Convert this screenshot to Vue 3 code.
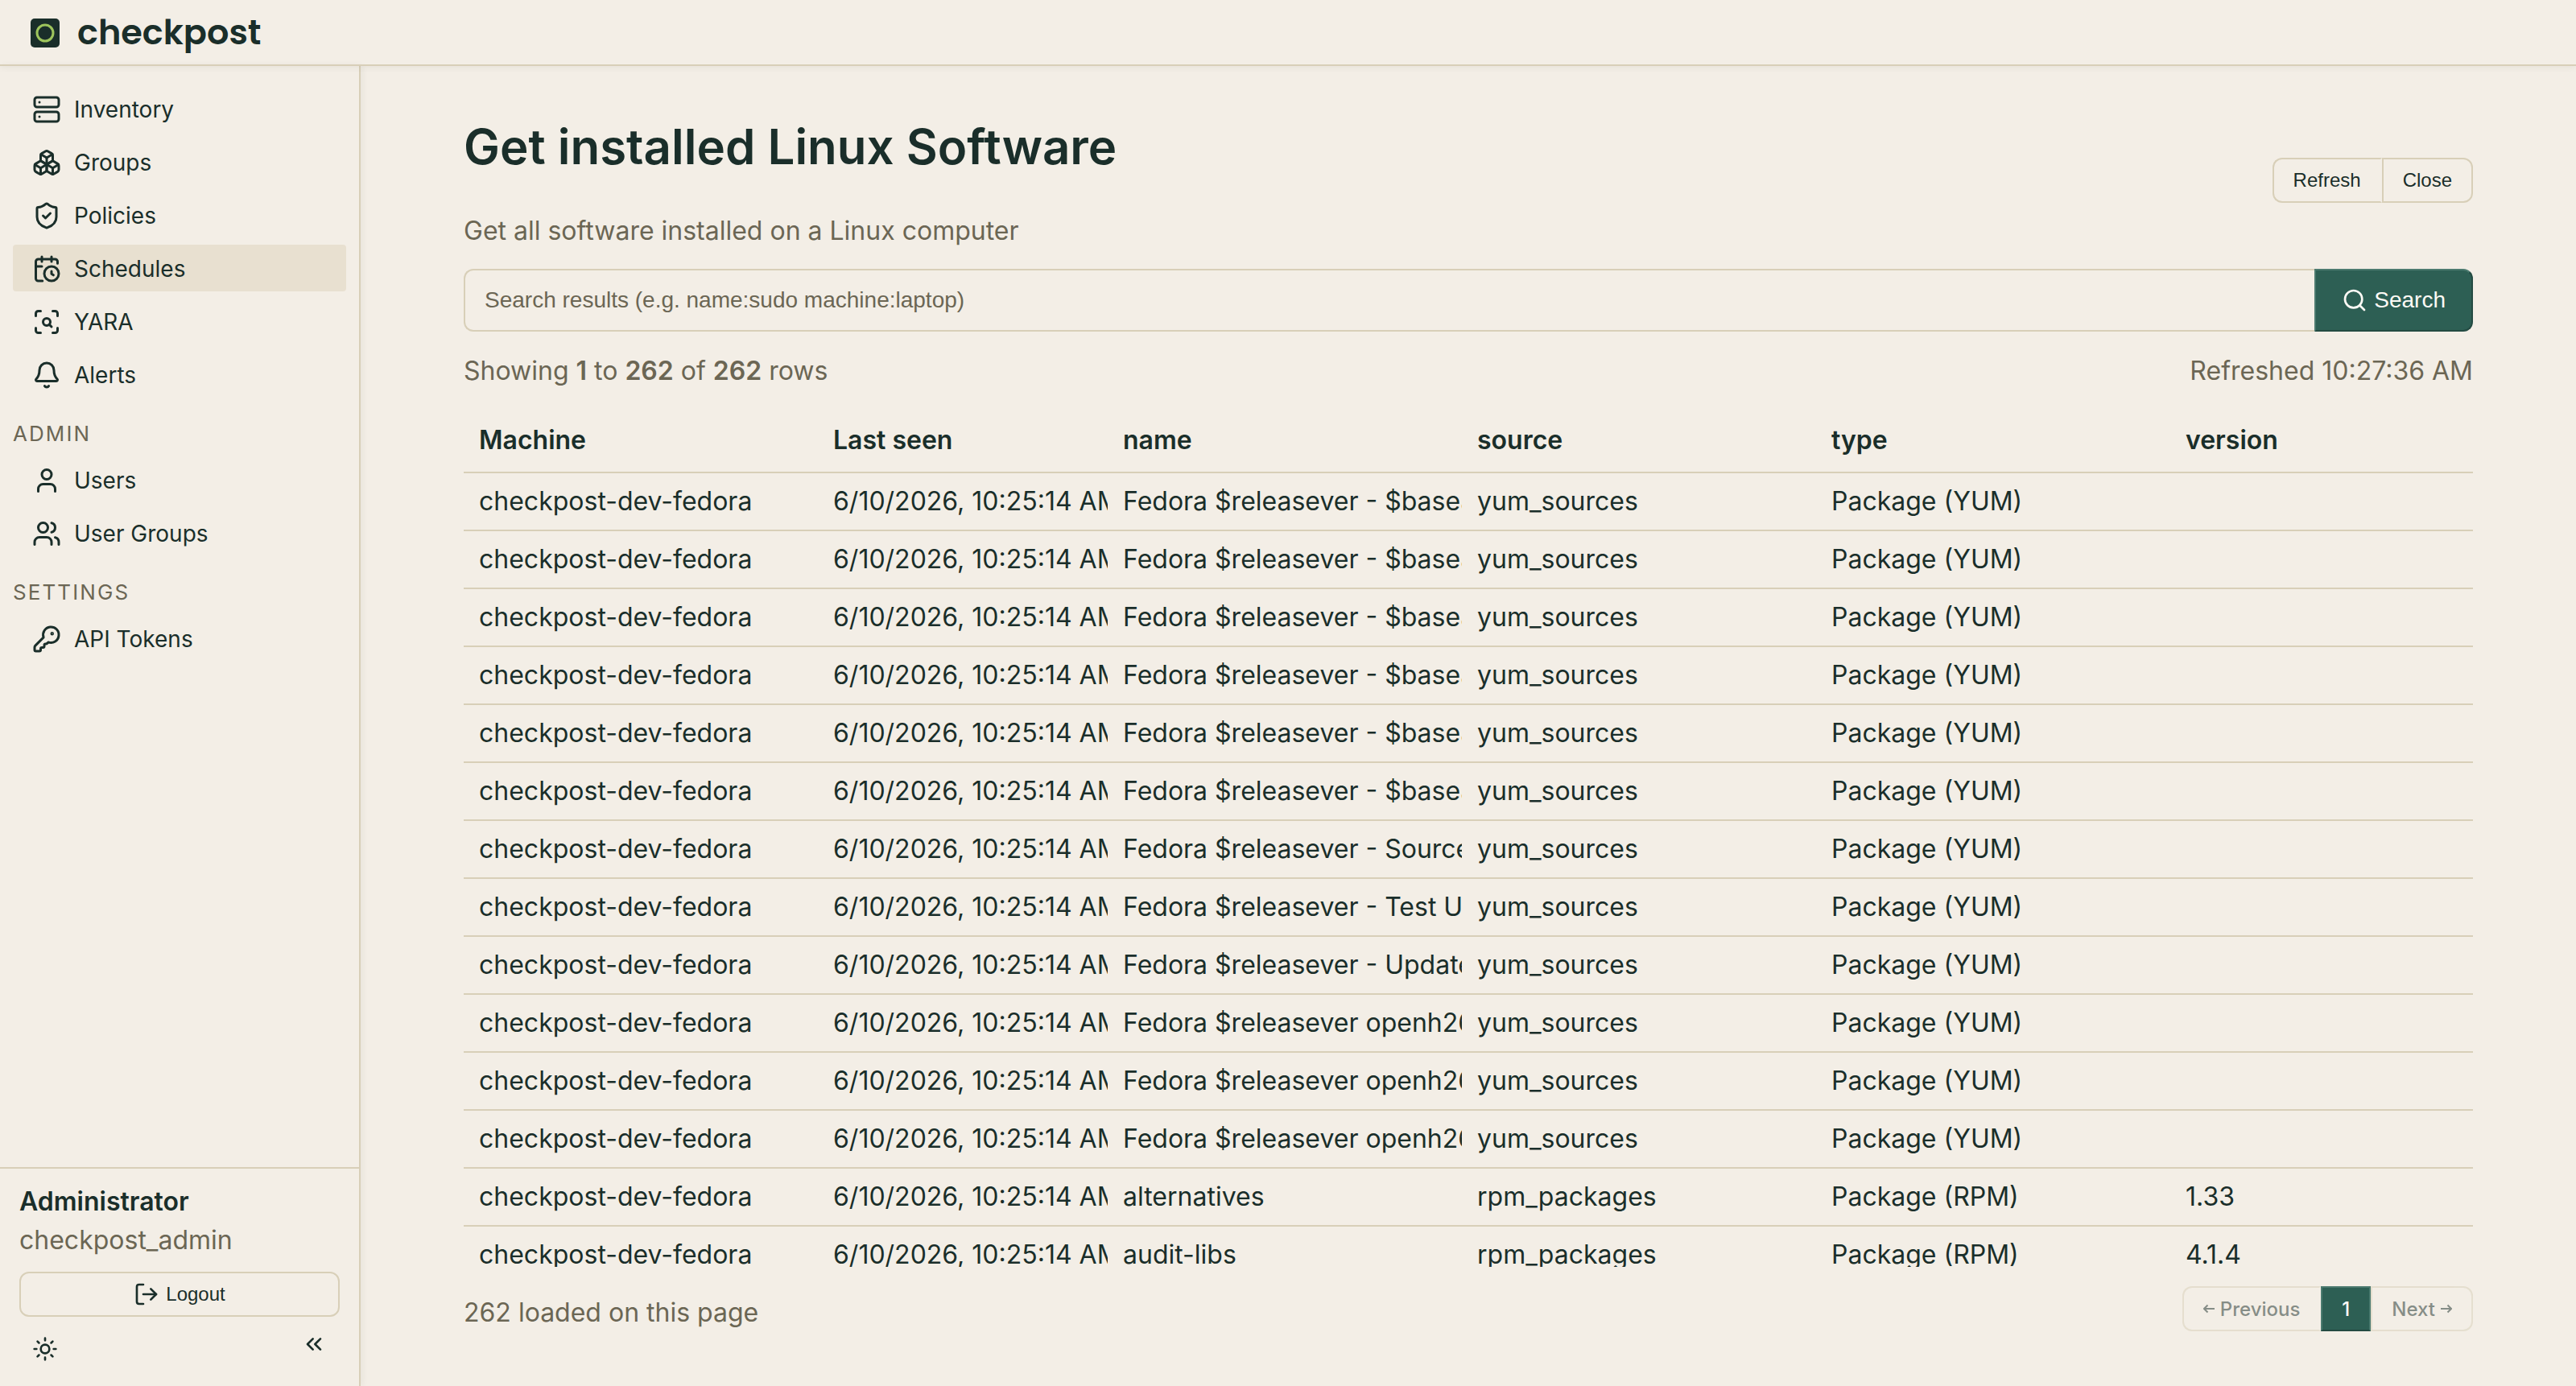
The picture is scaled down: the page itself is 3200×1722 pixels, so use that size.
<script setup>
import { ref } from 'vue'

const mainNav = [
  { label: 'Inventory', icon: 'server' },
  { label: 'Groups', icon: 'boxes' },
  { label: 'Policies', icon: 'shield' },
  { label: 'Schedules', icon: 'calendar', active: true },
  { label: 'YARA', icon: 'scan' },
  { label: 'Alerts', icon: 'bell' },
]
const adminNav = [
  { label: 'Users', icon: 'user' },
  { label: 'User Groups', icon: 'users' },
]
const settingsNav = [{ label: 'API Tokens', icon: 'key' }]

const sections = [
  { title: '', items: mainNav },
  { title: 'Admin', items: adminNav },
  { title: 'Settings', items: settingsNav },
]

const icons = {
  server: '<rect width="20" height="8" x="2" y="2" rx="2"/><rect width="20" height="8" x="2" y="14" rx="2"/><path d="M6 6h.01M6 18h.01"/>',
  boxes:
    '<path d="M2.97 12.92A2 2 0 0 0 2 14.63v3.24a2 2 0 0 0 .97 1.71l3 1.8a2 2 0 0 0 2.06 0L12 19v-5.5l-5-3-4.03 2.42Z"/><path d="m7 16.5-4.74-2.85"/><path d="m7 16.5 5-3"/><path d="M7 16.5v5.17"/><path d="M12 13.5V19l3.97 2.38a2 2 0 0 0 2.06 0l3-1.8a2 2 0 0 0 .97-1.71v-3.24a2 2 0 0 0-.97-1.71L17 10.5l-5 3Z"/><path d="m17 16.5-5-3"/><path d="m17 16.5 4.74-2.85"/><path d="M17 16.5v5.17"/><path d="M7.97 4.42A2 2 0 0 0 7 6.13v4.37l5 3 5-3V6.13a2 2 0 0 0-.97-1.71l-3-1.8a2 2 0 0 0-2.06 0l-3 1.8Z"/><path d="M12 8 7.26 5.15"/><path d="m12 8 4.74-2.85"/><path d="M12 13.5V8"/>',
  shield:
    '<path d="M20 13c0 5-3.5 7.5-7.66 8.95a1 1 0 0 1-.67-.01C7.5 20.5 4 18 4 13V6a1 1 0 0 1 1-1c2 0 4.5-1.2 6.24-2.72a1.17 1.17 0 0 1 1.52 0C14.51 3.81 17 5 19 5a1 1 0 0 1 1 1z"/><path d="m9 12 2 2 4-4"/>',
  calendar:
    '<path d="M16 14v2.2l1.6 1"/><path d="M16 2v4"/><path d="M21 7.5V6a2 2 0 0 0-2-2H5a2 2 0 0 0-2 2v14a2 2 0 0 0 2 2h3.5"/><path d="M3 10h5"/><path d="M8 2v4"/><circle cx="16" cy="16" r="6"/>',
  scan: '<path d="M3 7V5a2 2 0 0 1 2-2h2"/><path d="M17 3h2a2 2 0 0 1 2 2v2"/><path d="M21 17v2a2 2 0 0 1-2 2h-2"/><path d="M7 21H5a2 2 0 0 1-2-2v-2"/><circle cx="12" cy="12" r="3"/><path d="m16 16-1.9-1.9"/>',
  bell: '<path d="M10.268 21a2 2 0 0 0 3.464 0"/><path d="M3.262 15.326A1 1 0 0 0 4 17h16a1 1 0 0 0 .74-1.673C19.41 13.956 18 12.499 18 8A6 6 0 0 0 6 8c0 4.499-1.411 5.956-2.738 7.326"/>',
  user: '<path d="M19 21v-2a4 4 0 0 0-4-4H9a4 4 0 0 0-4 4v2"/><circle cx="12" cy="7" r="4"/>',
  users:
    '<path d="M16 21v-2a4 4 0 0 0-4-4H6a4 4 0 0 0-4 4v2"/><path d="M16 3.128a4 4 0 0 1 0 7.744"/><path d="M22 21v-2a4 4 0 0 0-3-3.87"/><circle cx="9" cy="7" r="4"/>',
  key: '<path d="M2.586 17.414A2 2 0 0 0 2 18.828V21a1 1 0 0 0 1 1h3a1 1 0 0 0 1-1v-1a1 1 0 0 1 1-1h1a1 1 0 0 0 1-1v-1a1 1 0 0 1 1-1h.172a2 2 0 0 0 1.414-.586l.814-.814a6.5 6.5 0 1 0-4-4z"/><circle cx="16.5" cy="7.5" r=".5" fill="currentColor"/>',
}

const columns = ['Machine', 'Last seen', 'name', 'source', 'type', 'version']

const yumNames = [
  ...Array(6).fill('Fedora $releasever - $basearch'),
  'Fedora $releasever - Source',
  'Fedora $releasever - Test Updates',
  'Fedora $releasever - Updates',
  ...Array(3).fill('Fedora $releasever openh264'),
]
const rows = [
  ...yumNames.map((name) => ({ name, source: 'yum_sources', type: 'Package (YUM)', version: '' })),
  { name: 'alternatives', source: 'rpm_packages', type: 'Package (RPM)', version: '1.33' },
  { name: 'audit-libs', source: 'rpm_packages', type: 'Package (RPM)', version: '4.1.4' },
]

const query = ref('')
</script>

<template>
  <div class="app">
    <header class="topbar">
      <svg class="logo" viewBox="0 0 40 40" aria-hidden="true">
        <rect x="2" y="3" width="36" height="36" rx="5" fill="#1a2e2a" />
        <circle cx="20" cy="21" r="10" fill="none" stroke="#9dc45c" stroke-width="3" />
      </svg>
      <span class="brand">checkpost</span>
    </header>

    <div class="body">
      <aside class="sidebar">
        <nav class="nav">
          <template v-for="section in sections" :key="section.title">
            <h2 v-if="section.title" class="nav-title">{{ section.title }}</h2>
            <a
              v-for="item in section.items"
              :key="item.label"
              href="#"
              class="nav-item"
              :class="{ active: item.active }"
            >
              <svg class="icon nav-icon" viewBox="0 0 24 24" v-html="icons[item.icon]"></svg>
              <span>{{ item.label }}</span>
            </a>
          </template>
        </nav>

        <div class="account">
          <div class="account-name">Administrator</div>
          <div class="account-login">checkpost_admin</div>
          <button type="button" class="btn logout">
            <svg class="icon" viewBox="0 0 24 24">
              <path d="M9 21H5a2 2 0 0 1-2-2V5a2 2 0 0 1 2-2h4" />
              <path d="m16 17 5-5-5-5" />
              <path d="M21 12H9" />
            </svg>
            Logout
          </button>
          <div class="account-tools">
            <button type="button" class="tool theme" aria-label="Toggle theme">
              <svg class="icon" viewBox="0 0 24 24">
                <circle cx="12" cy="12" r="4" />
                <path d="M12 2v2M12 20v2M4.93 4.93l1.41 1.41M17.66 17.66l1.41 1.41M2 12h2M20 12h2M6.34 17.66l-1.41 1.41M19.07 4.93l-1.41 1.41" />
              </svg>
            </button>
            <button type="button" class="tool collapse" aria-label="Collapse sidebar">
              <svg class="icon" viewBox="0 0 24 24">
                <path d="m11 17-5-5 5-5" />
                <path d="m18 17-5-5 5-5" />
              </svg>
            </button>
          </div>
        </div>
      </aside>

      <main class="main">
        <div class="page-head">
          <div>
            <h1>Get installed Linux Software</h1>
            <p class="muted">Get all software installed on a Linux computer</p>
          </div>
          <div class="group">
            <button type="button" class="btn">Refresh</button>
            <button type="button" class="btn">Close</button>
          </div>
        </div>

        <form class="search" @submit.prevent>
          <input
            v-model="query"
            type="text"
            aria-label="Search results"
            placeholder="Search results (e.g. name:sudo machine:laptop)"
          />
          <button type="submit" class="search-btn">
            <svg class="icon" viewBox="0 0 24 24">
              <path d="m21 21-4.34-4.34" />
              <circle cx="11" cy="11" r="8" />
            </svg>
            Search
          </button>
        </form>

        <div class="summary muted">
          <span>Showing <strong>1</strong> to <strong>262</strong> of <strong>262</strong> rows</span>
          <span>Refreshed 10:27:36 AM</span>
        </div>

        <div class="table-wrap">
          <table>
            <colgroup>
              <col class="col-wide" />
              <col class="col-date" />
              <col class="col-wide" />
              <col class="col-wide" />
              <col class="col-wide" />
              <col />
            </colgroup>
            <thead>
              <tr>
                <th v-for="column in columns" :key="column" scope="col">{{ column }}</th>
              </tr>
            </thead>
            <tbody>
              <tr v-for="(row, index) in rows" :key="index">
                <td>checkpost-dev-fedora</td>
                <td>6/10/2026, 10:25:14 AM</td>
                <td>{{ row.name }}</td>
                <td>{{ row.source }}</td>
                <td>{{ row.type }}</td>
                <td>{{ row.version }}</td>
              </tr>
            </tbody>
          </table>
        </div>

        <footer class="page-foot">
          <span class="muted">262 loaded on this page</span>
          <div class="group pager">
            <button type="button" class="btn" disabled>
              <svg class="arrow" viewBox="0 0 14 14"><path d="M14 7H1M5.500 2.500 1 7l4.500 4.500" /></svg>
              Previous
            </button>
            <button type="button" class="btn current" aria-current="page">1</button>
            <button type="button" class="btn" disabled>
              Next
              <svg class="arrow" viewBox="0 0 14 14"><path d="M0 7H13M8.500 2.500 13 7l-4.500 4.500" /></svg>
            </button>
          </div>
        </footer>
      </main>
    </div>
  </div>
</template>

<style>
body {
  margin: 0;
  background: #f3eee6;
}
</style>

<style scoped>
.app {
  --ink: #1a2e2a;
  --muted: #6b6654;
  --line: #d8cfb8;
  --primary: #2d5f54;
  --ui: 'Liberation Sans', Arial, sans-serif;
  display: flex;
  flex-direction: column;
  height: 100vh;
  background: #f3eee6;
  color: var(--ink);
  font-family: Inter, sans-serif;
  font-size: 32px;
  line-height: 48px;
}
.app *,
.app {
  box-sizing: border-box;
}

.topbar {
  display: flex;
  align-items: center;
  gap: 20px;
  height: 82px;
  flex: none;
  padding: 0 36px;
  border-bottom: 2px solid var(--line);
  box-shadow: 0 2px 8px rgba(26, 46, 42, 0.06);
  z-index: 2;
}
.logo {
  width: 40px;
  height: 40px;
}
.brand {
  font-family: Poppins, Inter, sans-serif;
  font-size: 43px;
  font-weight: 600;
}

.body {
  display: flex;
  flex: 1;
  min-height: 0;
}

.sidebar {
  display: flex;
  flex-direction: column;
  justify-content: space-between;
  width: 448px;
  flex: none;
  border-right: 2px solid var(--line);
  box-shadow: 2px 0 8px rgba(26, 46, 42, 0.06);
}
.nav {
  display: flex;
  flex-direction: column;
  gap: 8px;
  padding: 24px 16px;
}
.nav-item {
  display: flex;
  align-items: center;
  gap: 16px;
  padding: 9px 24px 7px;
  border-radius: 4px;
  color: var(--ink);
  font-size: 28px;
  line-height: 42px;
  text-decoration: none;
}
.nav-item.active {
  background: #e8e0d0;
}
.nav-title {
  margin: 0;
  padding-top: 16px;
  color: var(--muted);
  font-size: 26px;
  font-weight: 400;
  line-height: 41px;
  letter-spacing: 0.08em;
  text-transform: uppercase;
}
.icon {
  width: 32px;
  height: 32px;
  flex: none;
  fill: none;
  stroke: currentColor;
  stroke-width: 2;
  stroke-linecap: round;
  stroke-linejoin: round;
}
.nav-icon {
  width: 36px;
  height: 36px;
}

.account {
  padding: 17px 24px 14px;
  border-top: 2px solid var(--line);
}
.account-name {
  font-weight: 600;
}
.account-login,
.muted {
  color: var(--muted);
}
.muted {
  line-height: 46px;
}
.account-tools {
  display: flex;
  align-items: flex-start;
  justify-content: space-between;
  margin-top: 8px;
}

button {
  display: flex;
  align-items: center;
  justify-content: center;
  margin: 0;
  color: var(--ink);
  font-family: var(--ui);
}
.tool {
  border: 0;
  background: none;
}
.theme {
  padding: 16px;
}
.collapse {
  padding: 10px 16px;
}
.btn {
  height: 56px;
  gap: 7px;
  padding: 0 24px;
  border: 2px solid var(--line);
  border-radius: 12px;
  background: transparent;
  font-size: 24px;
}
.logout {
  width: 100%;
  gap: 8px;
  margin-top: 15px;
}

.main {
  display: flex;
  flex-direction: column;
  flex: 1;
  min-width: 0;
  padding: 56px 128px 68px;
}
.page-head {
  display: flex;
  align-items: center;
  justify-content: space-between;
}
h1 {
  margin: 0 0 38px;
  font-size: 60px;
  font-weight: 600;
  line-height: 88px;
}
p {
  margin: 0;
}
.group {
  display: flex;
}
.group .btn:not(:first-child) {
  border-top-left-radius: 0;
  border-bottom-left-radius: 0;
}
.group .btn:not(:last-child) {
  border-right-color: transparent;
  border-top-right-radius: 0;
  border-bottom-right-radius: 0;
}

.search {
  display: flex;
  margin-top: 24px;
}
.search input {
  flex: 1;
  min-width: 0;
  height: 78px;
  padding: 0 24px;
  border: 2px solid var(--line);
  border-right: 0;
  border-radius: 12px 0 0 12px;
  background: transparent;
  color: var(--ink);
  font-family: var(--ui);
  font-size: 28px;
  outline: none;
}
.search input::placeholder {
  color: var(--muted);
  opacity: 1;
}
.search-btn {
  gap: 8px;
  padding: 0 32px;
  border: 2px solid;
  border-color: #4b7a6f #234a42 #234a42 #4b7a6f;
  border-radius: 0 12px 12px 0;
  background: var(--primary);
  color: #fdfaf5;
  font-size: 28px;
}

.summary {
  display: flex;
  justify-content: space-between;
  margin-top: 26px;
}
strong {
  font-weight: 600;
}

.table-wrap {
  flex: 1;
  min-height: 0;
  margin: 24px 0;
  overflow: hidden;
}
table {
  width: 100%;
  table-layout: fixed;
  border-collapse: separate;
  border-spacing: 0;
}
.col-wide {
  width: 440px;
}
.col-date {
  width: 360px;
}
th,
td {
  height: 72px;
  padding: 0 0 0 19px;
  border-bottom: 2px solid var(--line);
  overflow: hidden;
  text-align: left;
  white-space: nowrap;
}
th {
  height: 80px;
  font-weight: 600;
}

.page-foot {
  display: flex;
  align-items: flex-end;
  justify-content: space-between;
}
.pager .btn {
  font-family: Inter, sans-serif;
  font-weight: 500;
}
.pager .btn:disabled {
  opacity: 0.5;
}
.pager .current {
  border-color: #4b7a6f #4b7a6f #234a42;
  background: var(--primary);
  color: #fdfaf5;
}
.group.pager .current {
  border-right-color: #4b7a6f;
}
.arrow {
  width: 14px;
  height: 14px;
  fill: none;
  stroke: currentColor;
  stroke-width: 2;
}
</style>
